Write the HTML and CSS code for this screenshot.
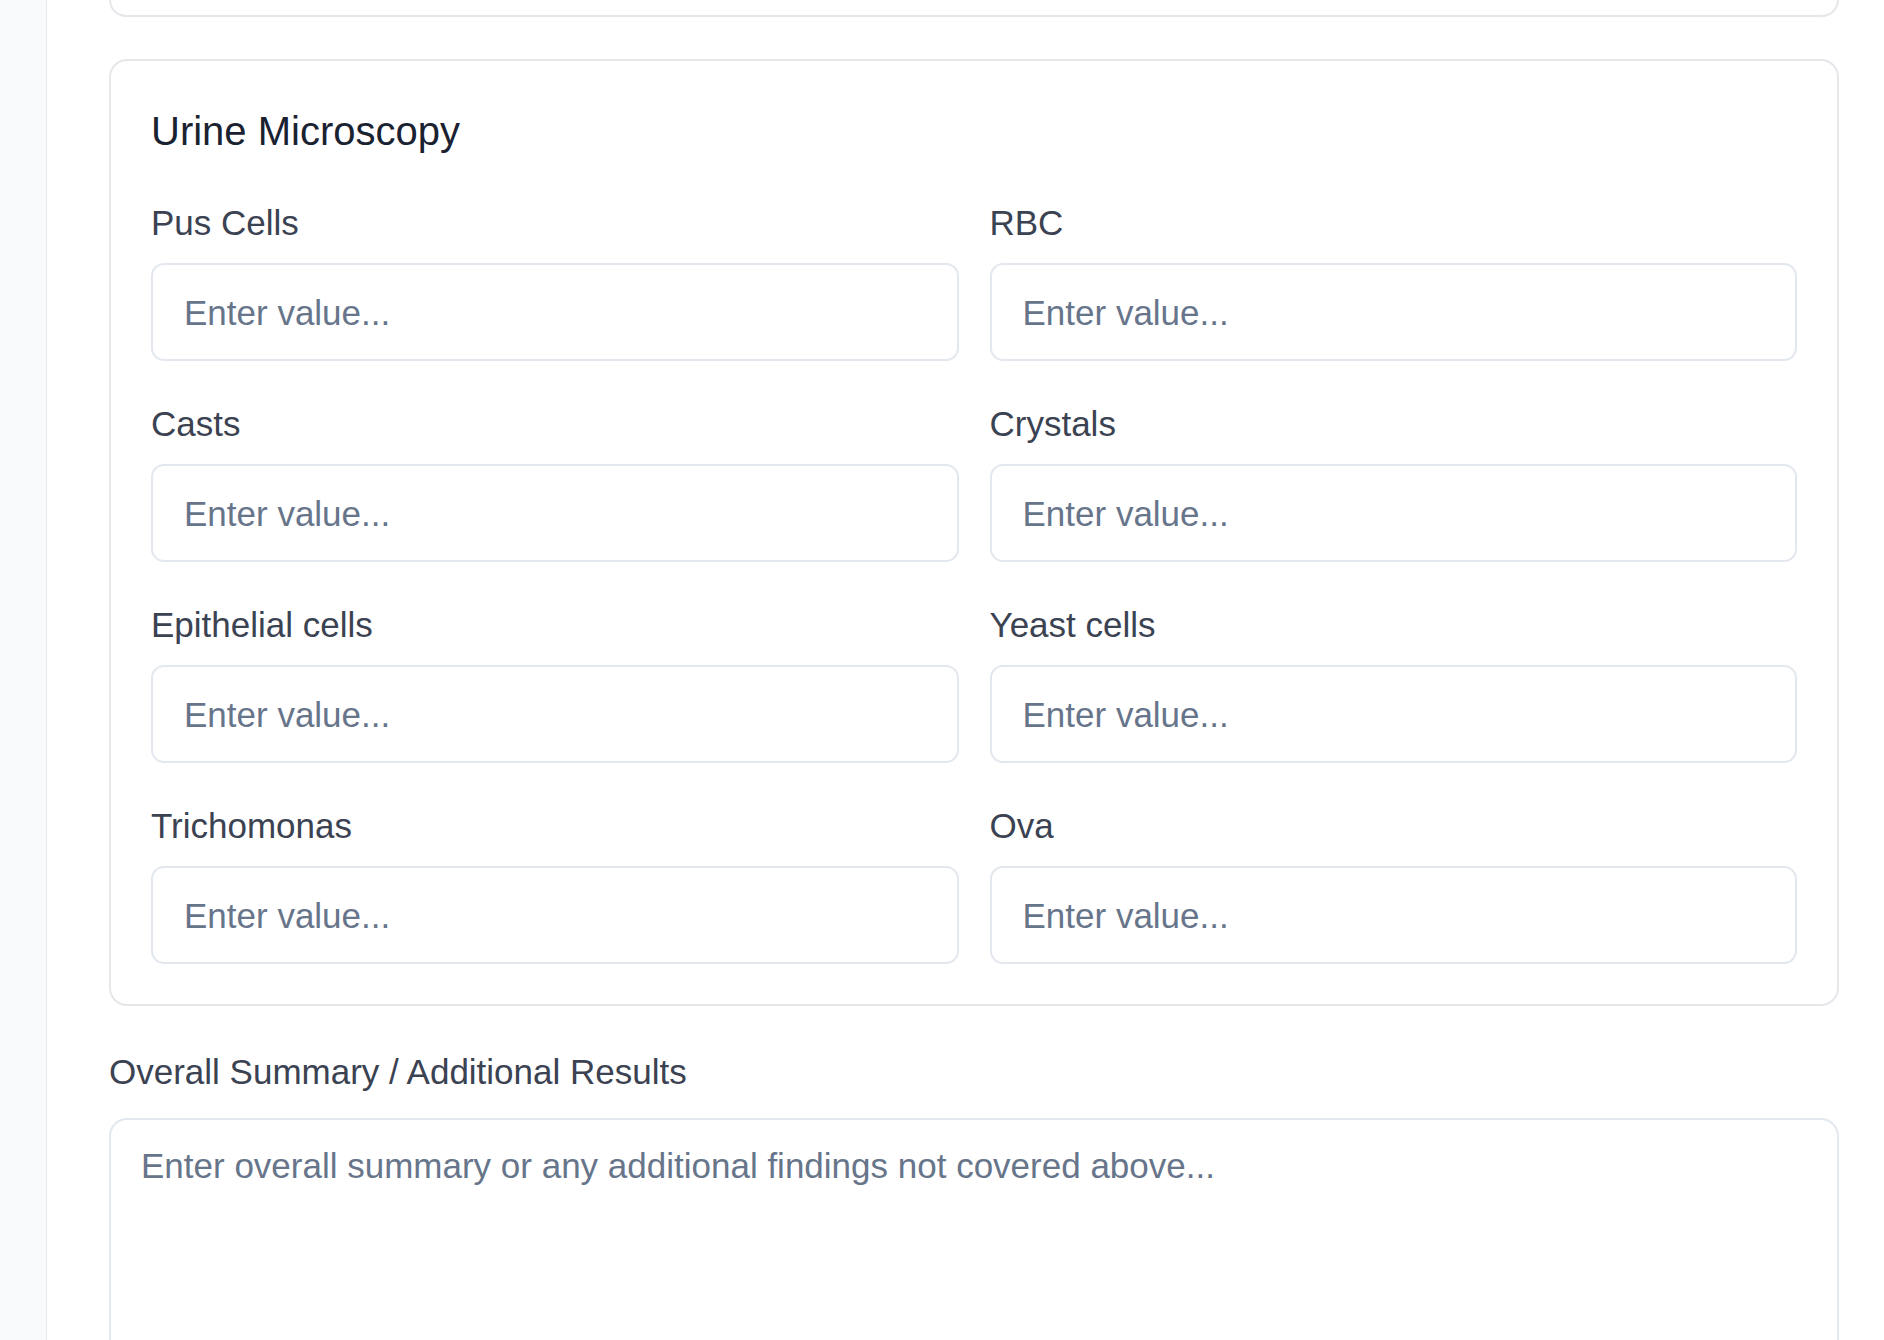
FILE: index.html
```html
<!DOCTYPE html>
<html lang="en">
<head>
<meta charset="utf-8">
<title>Urine Microscopy</title>
<link rel="stylesheet" href="styles.css">
</head>
<body>
<div class="layout">
  <aside class="sidebar"></aside>
  <main class="main">
    <div class="card card-prev"></div>
    <section class="card card-section">
      <h2 class="section-title">Urine Microscopy</h2>
      <div class="field-grid">
        <div class="field">
          <label class="field-label">Pus Cells</label>
          <input class="field-input" type="text" placeholder="Enter value...">
        </div>
        <div class="field">
          <label class="field-label">RBC</label>
          <input class="field-input" type="text" placeholder="Enter value...">
        </div>
        <div class="field">
          <label class="field-label">Casts</label>
          <input class="field-input" type="text" placeholder="Enter value...">
        </div>
        <div class="field">
          <label class="field-label">Crystals</label>
          <input class="field-input" type="text" placeholder="Enter value...">
        </div>
        <div class="field">
          <label class="field-label">Epithelial cells</label>
          <input class="field-input" type="text" placeholder="Enter value...">
        </div>
        <div class="field">
          <label class="field-label">Yeast cells</label>
          <input class="field-input" type="text" placeholder="Enter value...">
        </div>
        <div class="field">
          <label class="field-label">Trichomonas</label>
          <input class="field-input" type="text" placeholder="Enter value...">
        </div>
        <div class="field">
          <label class="field-label">Ova</label>
          <input class="field-input" type="text" placeholder="Enter value...">
        </div>
      </div>
    </section>
    <div class="summary">
      <label class="field-label summary-label">Overall Summary / Additional Results</label>
      <textarea class="summary-input" placeholder="Enter overall summary or any additional findings not covered above..."></textarea>
    </div>
  </main>
</div>
</body>
</html>
```

FILE: styles.css
```css
* {
  box-sizing: border-box;
}

html, body {
  margin: 0;
  padding: 0;
  height: 100%;
  overflow: hidden;
  background: #ffffff;
  font-family: "Liberation Sans", Arial, Helvetica, sans-serif;
}

.layout {
  display: flex;
  min-height: 100%;
}

.sidebar {
  width: 47px;
  flex: 0 0 47px;
  background: #f8fafc;
  border-right: 1px solid #e5e8ee;
}

.main {
  flex: 1;
  padding: 0 45px 0 62px;
}

.card {
  background: #ffffff;
  border: 2px solid #e5e7eb;
  border-radius: 18px;
}

.card-prev {
  height: 17px;
  border-top: none;
  border-top-left-radius: 0;
  border-top-right-radius: 0;
}

.card-section {
  margin-top: 42px;
  padding: 42px 40px 40px 40px;
}

.section-title {
  margin: 0 0 42px 0;
  font-size: 40px;
  line-height: 56px;
  font-weight: 400;
  color: #1a2231;
}

.field-grid {
  display: grid;
  grid-template-columns: 1fr 1fr;
  column-gap: 31px;
  row-gap: 41px;
}

.field {
  display: flex;
  flex-direction: column;
}

.field-label {
  display: block;
  font-size: 35px;
  line-height: 44px;
  color: #3b4252;
  margin-bottom: 18px;
}

.field-input {
  display: block;
  width: 100%;
  height: 98px;
  padding: 2px 31px 0 31px;
  border: 2px solid #e3e7ee;
  border-radius: 13px;
  background: #ffffff;
  font-family: "Liberation Sans", Arial, Helvetica, sans-serif;
  font-size: 35px;
  color: #1f2937;
  outline: none;
}

.field-input::placeholder {
  color: #67758b;
  opacity: 1;
}

.summary {
  margin-top: 44px;
}

.summary-label {
  margin-bottom: 24px;
}

.summary-input {
  display: block;
  width: 100%;
  height: 320px;
  padding: 24px 30px;
  border: 2px solid #e3e7ee;
  border-radius: 18px;
  background: #ffffff;
  font-family: "Liberation Sans", Arial, Helvetica, sans-serif;
  font-size: 35px;
  line-height: 44px;
  color: #1f2937;
  resize: vertical;
  outline: none;
}

.summary-input::placeholder {
  color: #67758b;
  opacity: 1;
}
```
